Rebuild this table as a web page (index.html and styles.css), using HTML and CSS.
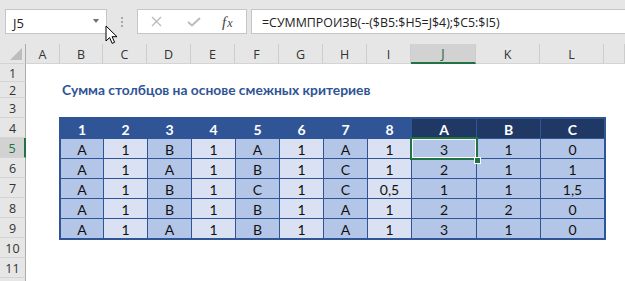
FILE: index.html
```html
<!DOCTYPE html>
<html lang="ru">
<head>
    <meta charset="UTF-8">
    <title>Сумма столбцов на основе смежных критериев</title>
    <link rel="stylesheet" href="styles.css">
</head>
<body>

<div class="window">
    <div class="formula-bar">
        <div class="name-box">
            <span>J5</span>
            <span class="caret"></span>
        </div>
        <div class="grip"><i></i><i></i><i></i></div>
        <div class="fx-box">
            <svg class="cancel" width="11" height="11" viewBox="0 0 11 11">
                <path d="M1 1L10 10M10 1L1 10" stroke="#bcbcbc" stroke-width="1.4" fill="none"/>
            </svg>
            <svg class="enter" width="14" height="10" viewBox="0 0 14 10">
                <path d="M1 5L5 8.5L13 1" stroke="#bcbcbc" stroke-width="2" fill="none"/>
            </svg>
            <span class="fx"><i>f</i><i>x</i></span>
        </div>
        <div class="formula">=СУММПРОИЗВ(--($B5:$H5=J$4);$C5:$I5)</div>
        <svg class="pointer" width="14" height="20" viewBox="0 0 14 20">
            <path d="M1 1L1 16L4.6 12.6L7.2 18.4L9.6 17.3L7.1 11.7L12 11.7Z" fill="#fff" stroke="#000" stroke-width="1" stroke-linejoin="miter"/>
        </svg>
    </div>

    <div class="sheet">
        <div class="corner"></div>
        <div class="col-head">A</div>
        <div class="col-head">B</div>
        <div class="col-head">C</div>
        <div class="col-head">D</div>
        <div class="col-head">E</div>
        <div class="col-head">F</div>
        <div class="col-head">G</div>
        <div class="col-head">H</div>
        <div class="col-head">I</div>
        <div class="col-head active">J</div>
        <div class="col-head">K</div>
        <div class="col-head">L</div>
        <div class="col-head"></div>

        <div class="row-head">1</div>
        <div class="row-head">2</div>
        <div class="row-head">3</div>
        <div class="row-head">4</div>
        <div class="row-head active">5</div>
        <div class="row-head">6</div>
        <div class="row-head">7</div>
        <div class="row-head">8</div>
        <div class="row-head">9</div>
        <div class="row-head">10</div>
        <div class="row-head">11</div>
        <div class="row-head"></div>

        <div class="title">Сумма столбцов на основе смежных критериев</div>

        <div class="data">
            <div class="th">1</div><div class="th">2</div><div class="th">3</div><div class="th">4</div>
            <div class="th">5</div><div class="th">6</div><div class="th">7</div><div class="th">8</div>
            <div class="th dark">A</div><div class="th dark">B</div><div class="th dark">C</div>

            <div class="td key">A</div><div class="td">1</div><div class="td key">B</div><div class="td">1</div>
            <div class="td key">A</div><div class="td">1</div><div class="td key">A</div><div class="td">1</div>
            <div class="td key selected">3<span class="sel-box"><span class="handle"></span></span></div>
            <div class="td key">1</div><div class="td key">0</div>

            <div class="td key">A</div><div class="td">1</div><div class="td key">A</div><div class="td">1</div>
            <div class="td key">B</div><div class="td">1</div><div class="td key">C</div><div class="td">1</div>
            <div class="td key">2</div><div class="td key">1</div><div class="td key">1</div>

            <div class="td key">A</div><div class="td">1</div><div class="td key">B</div><div class="td">1</div>
            <div class="td key">C</div><div class="td">1</div><div class="td key">C</div><div class="td">0,5</div>
            <div class="td key">1</div><div class="td key">1</div><div class="td key">1,5</div>

            <div class="td key">A</div><div class="td">1</div><div class="td key">B</div><div class="td">1</div>
            <div class="td key">B</div><div class="td">1</div><div class="td key">A</div><div class="td">1</div>
            <div class="td key">2</div><div class="td key">2</div><div class="td key">0</div>

            <div class="td key">A</div><div class="td">1</div><div class="td key">A</div><div class="td">1</div>
            <div class="td key">B</div><div class="td">1</div><div class="td key">A</div><div class="td">1</div>
            <div class="td key">3</div><div class="td key">1</div><div class="td key">0</div>
        </div>
    </div>
</div>

</body>
</html>
```

FILE: styles.css
```css
body {
    margin: 0;
    font-family: "Open Sans", sans-serif;
    background: #fff;
}
.window {
    position: relative;
    width: 625px;
    height: 281px;
    overflow: hidden;
    background: #fff;
}

/* formula bar */
.formula-bar {
    display: flex;
    align-items: flex-start;
    height: 44px;
    box-sizing: border-box;
    padding: 9px 0 0 5px;
    background: #e6e6e6;
}
.name-box, .fx-box, .formula {
    height: 25px;
    box-sizing: border-box;
    background: #fff;
    border: 1px solid #c6c6c6;
}
.name-box {
    width: 102px;
    display: flex;
    align-items: center;
    justify-content: space-between;
    padding: 3px 7px 0 7px;
    font-size: 13px;
    color: #222;
}
.caret {
    border-left: 3px solid transparent;
    border-right: 3px solid transparent;
    border-top: 4px solid #707070;
    margin-top: -4px;
}
.grip {
    width: 30px;
    height: 25px;
    display: flex;
    flex-direction: column;
    align-items: center;
    justify-content: center;
    gap: 2px;
}
.grip i {
    width: 2px;
    height: 2px;
    background: #a8a8a8;
}
.fx-box {
    width: 110px;
    display: flex;
    align-items: center;
    padding-left: 13px;
}
.enter {
    margin-left: 25px;
}
.fx {
    margin-left: 21px;
    font-family: "Liberation Serif", serif;
    font-size: 15px;
    color: #444;
    padding-top: 1px;
}
.fx i + i {
    font-size: 12px;
    margin-left: 1px;
}
.formula {
    flex: 1;
    margin: 0 -2px 0 4px;
    padding: 3px 0 0 10px;
    font-size: 12.4px;
    line-height: 19px;
    color: #222;
    white-space: nowrap;
}
.pointer {
    position: absolute;
    left: 105px;
    top: 25px;
}

/* sheet grid */
.sheet {
    display: grid;
    grid-template-columns: 26px 34px 43px repeat(7, 44px) 65px 64px 64px 1fr;
    grid-template-rows: 20px 18px 16px repeat(10, 20px);
    font-family: "Open Sans", sans-serif;
}
.corner {
    background: #e6e6e6;
    border-right: 1px solid #ababab;
    border-bottom: 1px solid #d4d4d4;
    position: relative;
}
.corner::after {
    content: "";
    position: absolute;
    right: 3px;
    bottom: 3px;
    border-left: 12px solid transparent;
    border-bottom: 12px solid #bdbdbd;
}
.col-head {
    background: #e6e6e6;
    border-right: 1px solid #cdcdcd;
    border-bottom: 1px solid #d4d4d4;
    display: flex;
    align-items: center;
    justify-content: center;
    font-size: 12.5px;
    color: #333;
    padding-top: 1px;
}
.col-head.active {
    background: #d2d2d2;
    border-bottom: 2px solid #217346;
    color: #1c5c38;
}
.row-head {
    grid-column: 1;
    background: #e6e6e6;
    border-right: 1px solid #ababab;
    border-bottom: 1px solid #d4d4d4;
    display: flex;
    align-items: center;
    justify-content: center;
    font-size: 12.5px;
    color: #333;
    padding-top: 2px;
    box-sizing: border-box;
}
.row-head.active {
    background: #d2d2d2;
    border-right: 2px solid #217346;
    color: #217346;
}

.title {
    grid-column: 3 / 14;
    grid-row: 3;
    padding-left: 2px;
    font-family: "Lato", sans-serif;
    font-weight: bold;
    font-size: 13.8px;
    line-height: 16px;
    color: #2f5496;
    white-space: nowrap;
}

/* data block */
.data {
    grid-column: 3 / 14;
    grid-row: 5 / 11;
    justify-self: start;
    align-self: start;
    margin: -1px 0 0 -1px;
    display: grid;
    grid-template-columns: 42px repeat(7, 43px) 64px 63px 63px;
    grid-auto-rows: 19px;
    gap: 1px;
    padding: 2px;
    background: #2f5597;
    font-family: "Lato", sans-serif;
    font-size: 14px;
}
.th, .td {
    display: flex;
    align-items: center;
    justify-content: center;
    padding-top: 1px;
}
.th {
    background: #2f5597;
    color: #fff;
    font-weight: bold;
}
.th.dark {
    background: #203864;
}
.td {
    background: #d9e1f2;
    color: #111;
}
.td.key {
    background: #b4c6e7;
}
.selected {
    position: relative;
}
.sel-box {
    position: absolute;
    inset: -2px;
    border: 2px solid #217346;
    box-shadow: inset 0 0 0 1px #fff;
}
.handle {
    position: absolute;
    right: -5px;
    bottom: -6px;
    width: 5px;
    height: 5px;
    background: #217346;
    border: 1px solid #fff;
}
```
